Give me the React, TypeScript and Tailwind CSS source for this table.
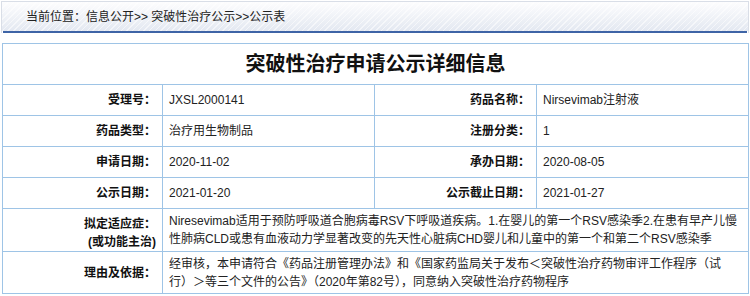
const FONT = "font-['Liberation_Sans','Noto_Sans_CJK_SC',sans-serif]"

const ROWS: [string, string, string, string][] = [
  ['受理号：', 'JXSL2000141', '药品名称：', 'Nirsevimab注射液'],
  ['药品类型：', '治疗用生物制品', '注册分类：', '1'],
  ['申请日期：', '2020-11-02', '承办日期：', '2020-08-05'],
  ['公示日期：', '2021-01-20', '公示截止日期：', '2021-01-27'],
]

const cell = 'border-r border-b border-[#9ec4e6] flex items-center'
const label = cell + ' justify-end pr-[6px] font-bold text-[#111]'
const value = cell + ' pl-[6px] text-[#222]'

export default function App() {
  return (
    <div className={`${FONT} h-[296px] w-[750px] bg-white text-[12px]`}>
      {/* 面包屑 */}
      <div className="ml-[1px] mt-[1px] w-[748px] border-x border-t border-[#d9dee7]">
        <div className="flex h-[29px] items-center bg-[image:repeating-linear-gradient(135deg,rgba(255,255,255,0.55)_0_1px,transparent_1px_4px),linear-gradient(to_bottom,#fdfdfe,#e3e8f1)] pl-[24px] text-[#222]">
          当前位置：信息公开&gt;&gt; 突破性治疗公示&gt;&gt;公示表
        </div>
        <div className="mx-[1px] h-[2px] bg-[#3e64a6]" />
      </div>

      {/* 详细信息 */}
      <div className="ml-[2px] mt-[10px] grid w-[747px] grid-cols-[160px_212px_162px_212px] border-l border-t border-[#9ec4e6] leading-[18px]">
        <div className={cell + ' col-span-4 h-[41px] justify-center text-[20px] font-bold text-[#111]'}>
          突破性治疗申请公示详细信息
        </div>
        {ROWS.map((r) => (
          <Linha key={r[0]} r={r} />
        ))}
        <div className={label + ' h-[43px] flex-col items-end justify-center'}>
          <span>拟定适应症：</span>
          <span>(或功能主治)</span>
        </div>
        <div className={value + ' col-span-3 whitespace-nowrap'}>
          <p>
            Niresevimab适用于预防呼吸道合胞病毒RSV下呼吸道疾病。1.在婴儿的第一个RSV感染季2.在患有早产儿慢
            <br />
            性肺病CLD或患有血液动力学显著改变的先天性心脏病CHD婴儿和儿童中的第一个和第二个RSV感染季
          </p>
        </div>
        <div className={label + ' h-[42px]'}>理由及依据：</div>
        <div className={value + ' col-span-3 whitespace-nowrap'}>
          <p>
            经审核，本申请符合《药品注册管理办法》和《国家药监局关于发布＜突破性治疗药物审评工作程序（试
            <br />
            行）＞等三个文件的公告》（2020年第82号），同意纳入突破性治疗药物程序
          </p>
        </div>
      </div>
    </div>
  )
}

function Linha({ r }: { r: [string, string, string, string] }) {
  return (
    <>
      <div className={label + ' h-[31px]'}>{r[0]}</div>
      <div className={value}>{r[1]}</div>
      <div className={label}>{r[2]}</div>
      <div className={value}>{r[3]}</div>
    </>
  )
}
